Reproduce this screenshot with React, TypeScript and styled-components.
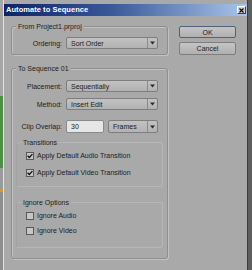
import React from "react";
import styled, { createGlobalStyle } from "styled-components";

const GlobalStyle = createGlobalStyle`
  html, body { margin: 0; padding: 0; }
  body { background: #9c9c9c; font-family: "Liberation Sans", Arial, sans-serif; }
`;

const Screen = styled.div`
  display: flex;
  width: 252px;
  height: 270px;
  overflow: hidden;
`;

const LeftEdge = styled.div`
  width: 3px;
  flex: none;
  display: flex;
  flex-direction: column;
  background: #a4a4a4;
`;

const EdgeBlock = styled.div<{ $h: number; $c: string }>`
  height: ${(p) => p.$h}px;
  background: ${(p) => p.$c};
  flex: none;
`;

const RightEdge = styled.div`
  width: 4px;
  flex: none;
  background: #5e5e5e;
  border-left: 1px solid #3c3c3c;
`;

const Dialog = styled.div`
  width: 244px;
  flex: none;
  box-sizing: border-box;
  border-left: 1px solid #e2e2e2;
  background: #a9a9a9;
  padding-top: 4px;
  display: flex;
  flex-direction: column;
`;

const TitleBar = styled.div`
  height: 12px;
  display: flex;
  align-items: center;
  justify-content: space-between;
  padding: 0 1px 0 2px;
  background: linear-gradient(90deg, #0c2468 0%, #3a5a9a 45%, #a8c6ea 100%);
`;

const Title = styled.span`
  color: #ffffff;
  font-weight: bold;
  font-size: 7.5px;
  line-height: 12px;
  letter-spacing: 0.05px;
`;

const CloseButton = styled.div`
  width: 9px;
  height: 8px;
  box-sizing: border-box;
  background: #d4d0c8;
  border: 1px solid;
  border-color: #ffffff #404040 #404040 #ffffff;
  display: flex;
  align-items: center;
  justify-content: center;
`;

const DialogBody = styled.div`
  display: flex;
  gap: 11px;
  padding: 10px 0 0 7px;
`;

const Groups = styled.div`
  display: flex;
  flex-direction: column;
  gap: 13px;
  width: 157px;
`;

const Group = styled.div<{ $h: number }>`
  box-sizing: border-box;
  height: ${(p) => p.$h}px;
  border: 1px solid #8e8e8e;
  border-radius: 3px;
  box-shadow: inset 1px 1px 0 #c2c2c2, 1px 1px 0 #c2c2c2;
  display: flex;
  flex-direction: column;
`;

const SubGroup = styled.div<{ $h: number; $mt: number }>`
  box-sizing: border-box;
  height: ${(p) => p.$h}px;
  margin: ${(p) => p.$mt}px 4px 0 4px;
  border: 1px solid #b6b6b6;
  border-left-color: #a2a2a2;
  border-radius: 3px;
  display: flex;
  flex-direction: column;
`;

const Legend = styled.div<{ $ml?: number }>`
  align-self: flex-start;
  margin: -5px 0 0 ${(p) => p.$ml ?? 4}px;
  padding: 0 2px;
  background: #a9a9a9;
  font-size: 7px;
  line-height: 9px;
  color: #1c1c1c;
`;

const FieldRow = styled.div<{ $mt: number; $h?: number }>`
  display: flex;
  align-items: center;
  gap: 4px;
  margin-top: ${(p) => p.$mt}px;
  height: ${(p) => p.$h ?? 12}px;
`;

const FieldLabel = styled.span`
  width: 50px;
  text-align: right;
  font-size: 7px;
  color: #1c1c1c;
  white-space: nowrap;
`;

const Select = styled.div<{ $w: number }>`
  box-sizing: border-box;
  width: ${(p) => p.$w}px;
  height: 100%;
  border: 1px solid #7e7e7e;
  border-radius: 2px;
  background: linear-gradient(#c2c2c2, #b2b2b2);
  display: flex;
  align-items: center;
`;

const SelectText = styled.span`
  flex: 1;
  padding-left: 4px;
  font-size: 7px;
  color: #1c1c1c;
  white-space: nowrap;
`;

const SelectArrow = styled.div`
  width: 9px;
  height: 100%;
  border-left: 1px solid #8a8a8a;
  display: flex;
  align-items: center;
  justify-content: center;
`;

const TextInput = styled.div`
  box-sizing: border-box;
  width: 38px;
  height: 100%;
  border: 1px solid #8a8a8a;
  border-radius: 2px;
  background: #e6e6e6;
  padding-left: 4px;
  font-size: 7px;
  line-height: 11px;
  color: #1c1c1c;
`;

const CheckRow = styled.div<{ $mt: number }>`
  display: flex;
  align-items: center;
  gap: 3px;
  margin: ${(p) => p.$mt}px 0 0 9px;
  height: 9px;
`;

const Box = styled.div`
  width: 8px;
  height: 8px;
  box-sizing: border-box;
  border: 1px solid #5a5a5a;
  background: #c6c6c6;
  display: flex;
  align-items: center;
  justify-content: center;
`;

const CheckLabel = styled.span`
  font-size: 7px;
  color: #1c1c1c;
  white-space: nowrap;
`;

const Buttons = styled.div`
  display: flex;
  flex-direction: column;
  gap: 4px;
  width: 57px;
`;

const Button = styled.div<{ $primary?: boolean; $h: number }>`
  box-sizing: border-box;
  height: ${(p) => p.$h}px;
  border: 1px solid ${(p) => (p.$primary ? "#52607e" : "#7e7e7e")};
  border-radius: 2px;
  background: linear-gradient(#c4c4c4, #b0b0b0);
  font-size: 7px;
  color: #1c1c1c;
  display: flex;
  align-items: center;
  justify-content: center;
`;

const Arrow = () => (
  <svg width="5" height="4" viewBox="0 0 5 4">
    <path d="M0 0.5h5L2.5 3.5z" fill="#2a2a2a" />
  </svg>
);

const Check = () => (
  <svg width="6" height="6" viewBox="0 0 6 6">
    <path d="M0.6 2.8L2.3 4.5L5.4 1.1" stroke="#111" strokeWidth="1.3" fill="none" />
  </svg>
);

const CloseX = () => (
  <svg width="5" height="5" viewBox="0 0 5 5">
    <path d="M0.5 0.5L4.5 4.5M4.5 0.5L0.5 4.5" stroke="#000" strokeWidth="1.1" />
  </svg>
);

const Dropdown = ({ w, text }: { w: number; text: string }) => (
  <Select $w={w}>
    <SelectText>{text}</SelectText>
    <SelectArrow>
      <Arrow />
    </SelectArrow>
  </Select>
);

const Checkbox = ({ mt, checked, label }: { mt: number; checked?: boolean; label: string }) => (
  <CheckRow $mt={mt}>
    <Box>{checked && <Check />}</Box>
    <CheckLabel>{label}</CheckLabel>
  </CheckRow>
);

export default function App() {
  return (
    <>
      <GlobalStyle />
      <Screen>
        <LeftEdge>
          <EdgeBlock $h={96} $c="#a6a6a6" />
          <EdgeBlock $h={72} $c="#4e8e46" />
          <EdgeBlock $h={22} $c="#9a9a9a" />
          <EdgeBlock $h={2} $c="#d89a2a" />
          <EdgeBlock $h={78} $c="#8e8e8e" />
        </LeftEdge>
        <Dialog>
          <TitleBar>
            <Title>Automate to Sequence</Title>
            <CloseButton>
              <CloseX />
            </CloseButton>
          </TitleBar>
          <DialogBody>
            <Groups>
              <Group $h={29}>
                <Legend>From Project1.prproj</Legend>
                <FieldRow $mt={6}>
                  <FieldLabel>Ordering:</FieldLabel>
                  <Dropdown w={92} text="Sort Order" />
                </FieldRow>
              </Group>
              <Group $h={191}>
                <Legend>To Sequence 01</Legend>
                <FieldRow $mt={7}>
                  <FieldLabel>Placement:</FieldLabel>
                  <Dropdown w={92} text="Sequentially" />
                </FieldRow>
                <FieldRow $mt={6}>
                  <FieldLabel>Method:</FieldLabel>
                  <Dropdown w={92} text="Insert Edit" />
                </FieldRow>
                <FieldRow $mt={10} $h={13}>
                  <FieldLabel>Clip Overlap:</FieldLabel>
                  <TextInput>30</TextInput>
                  <Dropdown w={50} text="Frames" />
                </FieldRow>
                <SubGroup $h={45} $mt={9}>
                  <Legend $ml={4}>Transitions</Legend>
                  <Checkbox mt={4} checked label="Apply Default Audio Transition" />
                  <Checkbox mt={8} checked label="Apply Default Video Transition" />
                </SubGroup>
                <SubGroup $h={46} $mt={15}>
                  <Legend $ml={4}>Ignore Options</Legend>
                  <Checkbox mt={4} label="Ignore Audio" />
                  <Checkbox mt={6} label="Ignore Video" />
                </SubGroup>
              </Group>
            </Groups>
            <Buttons>
              <Button $primary $h={12}>OK</Button>
              <Button $h={13}>Cancel</Button>
            </Buttons>
          </DialogBody>
        </Dialog>
        <RightEdge />
      </Screen>
    </>
  );
}
